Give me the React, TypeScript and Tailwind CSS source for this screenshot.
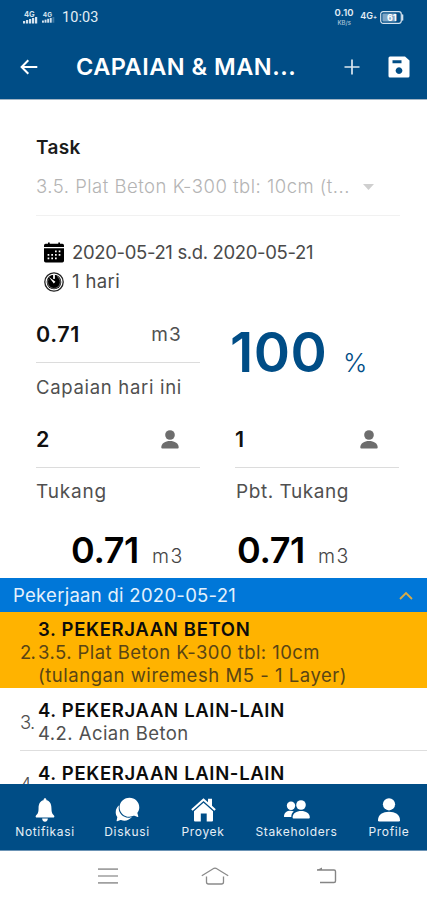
import type { ReactNode } from "react";
import { IoIosChatbubbles, IoIosNotifications } from "react-icons/io";

function Signal({ bars }: { bars: number }) {
  return (
    <svg width="15" height="13" viewBox="0 0 15 13" fill="#d5e3ef">
      <text x="1" y="6" fontSize="7.5" fontWeight="700" fontFamily="Inter, sans-serif">
        4G
      </text>
      {[0, 1, 2, 3, 4].map((i) => (
        <rect key={i} x={i * 3} y={10 - i} width="2.2" height={2.5 + i} opacity={i < bars ? 1 : 0.3} />
      ))}
    </svg>
  );
}

function StatusBar() {
  return (
    <div className="flex h-[35px] items-center pl-[23px] pr-[23px] text-[#e3edf5]">
      <Signal bars={5} />
      <span className="ml-1 flex w-[13px]">
        <Signal bars={4} />
      </span>
      <span className="ml-[7px] pt-[2px] font-['Roboto',sans-serif] text-[14.5px] leading-none tracking-[0.1px]">
        10:03
      </span>
      <div className="ml-auto flex w-[20px] flex-col items-center">
        <span className="text-[9.5px] font-semibold leading-[10px] tracking-[0.2px]">0.10</span>
        <span className="text-[6px] font-medium leading-[9px] text-[#a9c3d8]">KB/s</span>
      </div>
      <span className="ml-[6px] mt-[-4px] flex items-baseline text-[9px] font-semibold leading-none">
        4G<span className="text-[6px]">+</span>
      </span>
      <svg className="ml-[3px]" width="24" height="13" viewBox="0 0 24 13">
        <rect x=".7" y=".7" width="20.6" height="11.6" rx="2.5" fill="none" stroke="#d5e3ef" strokeWidth="1.2" />
        <rect x="2.4" y="2.4" width="14" height="8.2" rx="1" fill="#7fa6c6" />
        <path d="M22.6 4v5" stroke="#d5e3ef" strokeWidth="1.4" strokeLinecap="round" />
        <text x="7" y="9.8" fontSize="9" fontWeight="700" fontFamily="Inter, sans-serif" fill="#fff">
          61
        </text>
      </svg>
    </div>
  );
}

function Header() {
  return (
    <header className="h-[100px] shrink-0 border-b border-[#a3b5c4] bg-[#004d86] text-white">
      <StatusBar />
      <div className="flex h-16 items-center pl-5">
        <svg width="18" height="16" viewBox="0 0 18 16" fill="none" stroke="#fff" strokeWidth="2">
          <path d="M17.3 8H2M8.3 1.2 1.6 8l6.7 6.8" />
        </svg>
        <h1 className="ml-[38px] w-[222px] whitespace-nowrap text-[23.5px] font-semibold tracking-[0.5px]">
          CAPAIAN &amp; MAN...
        </h1>
        <svg className="ml-[46px]" width="16" height="16" viewBox="0 0 16 16" stroke="#dbe7f0" strokeWidth="1.7">
          <path d="M8 .5v15M.5 8h15" />
        </svg>
        <svg className="ml-[28px]" width="22" height="22" viewBox="0 0 22 22">
          <path
            fill="#fff"
            fillRule="evenodd"
            d="M2 .5h15l4.500 4V20q0 1.500-1.500 1.500H2Q.5 21.500.5 20V2Q.5.5 2 .5zM4.500 4.200v3h9v-3zM11 11.200a3.400 3.400 0 1 0 .01 0z"
          />
        </svg>
      </div>
    </header>
  );
}

function Calendar() {
  return (
    <svg width="20" height="21" viewBox="0 0 20 21">
      <path d="M1.600 1.800H4V.5h1.700v1.300h8.600V.5H16v1.300h2.400Q20 1.800 20 3.400V5H0V3.400Q0 1.800 1.600 1.800z" />
      <path d="M0 6.200h20v12.600q0 1.700-1.700 1.700H1.700Q0 20.500 0 18.800z" />
      <path
        d="M11 9.300h6M3.600 12.800h13.400M3.600 16.300h9.500"
        stroke="#fff"
        strokeWidth="1.700"
        strokeDasharray="1.700 2"
      />
    </svg>
  );
}

function Timer() {
  return (
    <svg width="20" height="20" viewBox="0 0 20 20">
      <circle cx="10" cy="10" r="9.2" fill="none" stroke="#222" strokeWidth="1.3" />
      <circle cx="10" cy="10" r="7.3" fill="#000" />
      <path d="M10 2.800v3.400" stroke="#fff" strokeWidth="1.800" strokeLinecap="round" />
      <path d="M4.900 4.900 11.400 9.800 9.800 11.400z" fill="#fff" />
      <path d="M4.200 7.200a6.400 6.400 0 1 0 9-2.700" fill="none" stroke="#999" strokeWidth=".7" />
    </svg>
  );
}

function Person({ className }: { className: string }) {
  return (
    <svg className={className} viewBox="0 0 22 24" fill="currentColor">
      <circle cx="11" cy="6.300" r="6.100" />
      <path d="M0 22.200C0 16.500 5 13.800 11 13.800s11 2.700 11 8.400q0 1.300-1.300 1.300H1.300Q0 23.500 0 22.200z" />
    </svg>
  );
}

function People() {
  return (
    <svg width="26" height="19" viewBox="0 0 26 19" fill="#fff">
      <circle cx="7" cy="5.700" r="4.200" />
      <path d="M0 16.500c0-3.700 2.800-5.700 6.600-5.700 1.300 0 2.400.2 3.200.7C8 12.700 7.300 14.600 7.300 17H.5q-.5 0-.5-.5z" />
      <circle cx="17" cy="5" r="4.800" />
      <path d="M8.600 17.600c0-4.300 3.800-6.500 8.600-6.500s8.600 2.200 8.600 6.500q0 .9-.9.9H9.500q-.9 0-.9-.9z" />
    </svg>
  );
}

function House() {
  return (
    <svg width="25" height="24" viewBox="0 0 25 24" fill="#fff">
      <path d="M12.500.3 17 4.200V.8h4v7l3.800 3.400-1.400 1.600L12.500 3.100 1.600 12.800.2 11.200z" />
      <path d="M12.500 4.700 22 13.200v9.300q0 1-1 1h-5.300v-8H9.800v8H4q-1 0-1-1v-9.300z" />
    </svg>
  );
}

function Field({ value, label, labelClass, children }: { value: string; label: string; labelClass: string; children: ReactNode }) {
  return (
    <div className="w-[164px]">
      <div className="flex h-14 items-center justify-between border-b border-[#dcdcdc] pr-[21px]">
        <span className="text-[21.5px] font-semibold tracking-[0.6px] text-[#111]">{value}</span>
        {children}
      </div>
      <div className={"flex h-[49px] items-center whitespace-nowrap text-[#505050] " + labelClass}>
        {label}
      </div>
    </div>
  );
}

function Total() {
  return (
    <div className="flex w-[166px] items-baseline">
      <span className="w-[81px] text-[36px] font-semibold leading-[38px] tracking-[-0.36px] text-black">0.71</span>
      <span className="text-[19.5px] font-light tracking-[1.4px] text-[#444]">m3</span>
    </div>
  );
}

function JobTitle({ children }: { children: string }) {
  return (
    <div className="whitespace-nowrap text-[18.5px] font-semibold leading-[23px] tracking-[0.66px] text-[#0c0c0c]">
      {children}
    </div>
  );
}

function JobList() {
  return (
    <div className="h-[172px] shrink-0 overflow-hidden text-[18.5px] leading-[23px]">
      <div className="flex h-[75.5px] items-center bg-[#ffb300] pl-5 pt-[5px] text-[#5a4514]">
        <span className="w-[18px] tracking-[-0.8px]">2.</span>
        <div>
          <JobTitle>3. PEKERJAAN BETON</JobTitle>
          <div className="tracking-[0.44px]">3.5. Plat Beton K-300 tbl: 10cm</div>
          <div className="tracking-[0.53px]">(tulangan wiremesh M5 - 1 Layer)</div>
        </div>
      </div>
      <div className="ml-5 flex h-[63px] items-center border-b border-[#dedede] pt-[7px] text-[#505050]">
        <span className="w-[18px] font-light tracking-[-0.8px]">3.</span>
        <div>
          <JobTitle>4. PEKERJAAN LAIN-LAIN</JobTitle>
          <div className="tracking-[0.44px]">4.2. Acian Beton</div>
        </div>
      </div>
      <div className="ml-5 flex items-start pt-[11.5px] text-[#505050]">
        <span className="w-[18px] pt-[11px] font-light">4.</span>
        <JobTitle>4. PEKERJAAN LAIN-LAIN</JobTitle>
      </div>
    </div>
  );
}

function Tab({ icon, label, width }: { icon: ReactNode; label: string; width: string }) {
  return (
    <div className={"flex flex-col items-center " + width}>
      <div className="flex h-[31px] items-center justify-center">{icon}</div>
      <span className="text-[12px] leading-[13px] tracking-[0.66px] text-[#e6eff6]">{label}</span>
    </div>
  );
}

export default function App() {
  return (
    <div className="flex h-[900px] w-[427px] flex-col overflow-hidden bg-white font-['Inter',sans-serif]">
      <Header />
      <main className="h-[478px] shrink-0 pl-9 pt-9">
        <div className="pt-px text-[19px] font-semibold leading-[22px] tracking-[0.3px] text-[#1b1b1b]">Task</div>
        <div className="flex h-[57px] w-[364px] items-center border-b border-[#f1f1f1] text-[#b4b4b4]">
          <span className="w-[327px] whitespace-nowrap text-[18.5px] font-light tracking-[0.5px]">
            3.5. Plat Beton K-300 tbl: 10cm (t...
          </span>
          <svg width="11" height="6" viewBox="0 0 11 6" fill="#cfcfcf">
            <path d="M0 0h11L5.5 6z" />
          </svg>
        </div>
        <div className="mt-[21px] flex h-[30px] items-center pl-[8px] text-[18.5px] tracking-[-0.35px] text-[#4a4a4a]">
          <Calendar />
          <span className="ml-[8px] pt-px">2020-05-21 s.d. 2020-05-21</span>
        </div>
        <div className="flex h-[30px] items-center pl-[8px] text-[18.5px] tracking-[0.37px] text-[#4a4a4a]">
          <Timer />
          <span className="ml-[8px]">1 hari</span>
        </div>
        <div className="mt-[10px] flex gap-[35px]">
          <Field value="0.71" label="Capaian hari ini" labelClass="text-[18.5px] tracking-[0.69px]">
            <span className="mr-[-3px] pt-px text-[19px] tracking-[1.2px] text-[#505050]">m3</span>
          </Field>
          <div className="flex items-baseline pt-[17px] text-[#004d86]">
            <span className="ml-[-5px] w-[113px] text-[55px] font-semibold leading-[56px] tracking-[0.5px]">100</span>
            <span className="text-[26px] font-light tracking-tight">%</span>
          </div>
        </div>
        <div className="flex gap-[35px]">
          <Field value="2" label="Tukang" labelClass="text-[19px] tracking-[0.8px]">
            <Person className="h-[19px] w-[18px] text-[#6d6d6d]" />
          </Field>
          <Field value="1" label="Pbt. Tukang" labelClass="pl-px text-[19px] tracking-[0.56px]">
            <Person className="h-[19px] w-[18px] text-[#6d6d6d]" />
          </Field>
        </div>
        <div className="mt-[14px] flex pl-[35px]">
          <Total />
          <Total />
        </div>
      </main>
      <div className="flex h-[34px] shrink-0 items-center justify-between bg-[#0077d8] pl-[13px] pr-[14px] text-[18.5px] tracking-[0.28px] text-[#e4f1fc]">
        <span className="pt-[2px]">Pekerjaan di 2020-05-21</span>
        <svg width="14" height="9" viewBox="0 0 14 9" fill="none" stroke="#d9ab45" strokeWidth="1.8">
          <path d="m1 8 6-6 6 6" />
        </svg>
      </div>
      <JobList />
      <nav className="flex h-[67px] shrink-0 border-b border-[#6b93b5] bg-[#004d86] pt-[10px] text-white">
        <Tab width="w-[90px]" label="Notifikasi" icon={<IoIosNotifications className="size-[30px]" />} />
        <Tab width="w-[74px]" label="Diskusi" icon={<IoIosChatbubbles className="size-[29px]" />} />
        <Tab width="w-[78px]" label="Proyek" icon={<House />} />
        <Tab width="w-[109px]" label="Stakeholders" icon={<People />} />
        <Tab width="w-[76px]" label="Profile" icon={<Person className="h-[24px] w-[22px]" />} />
      </nav>
      <footer className="flex h-[49px] items-center pl-[98px]">
        <svg width="20" height="16" viewBox="0 0 20 16" stroke="#a0a0a0" strokeWidth="1.7">
          <path d="M0 1.2h20M0 8h20M0 14.8h20" />
        </svg>
        <svg className="ml-[83px]" width="28" height="18" viewBox="0 0 28 18" fill="none" stroke="#8a8a8a" strokeWidth="1.3">
          <path d="M.8 8.800 13 1.300q1-.5 2 0L27.200 8.800M5.500 9.500V15q0 2 2 2h13q2 0 2-2V9.500" />
        </svg>
        <svg className="ml-[87px]" width="21" height="17" viewBox="0 0 21 17" fill="none" stroke="#858585" strokeWidth="1.4">
          <path d="M1 3h17q1.500 0 1.500 1.500v9.500q0 1.500-1.500 1.500H4" />
          <path d="M6 .5V3H1z" fill="#858585" stroke="none" />
        </svg>
      </footer>
    </div>
  );
}
